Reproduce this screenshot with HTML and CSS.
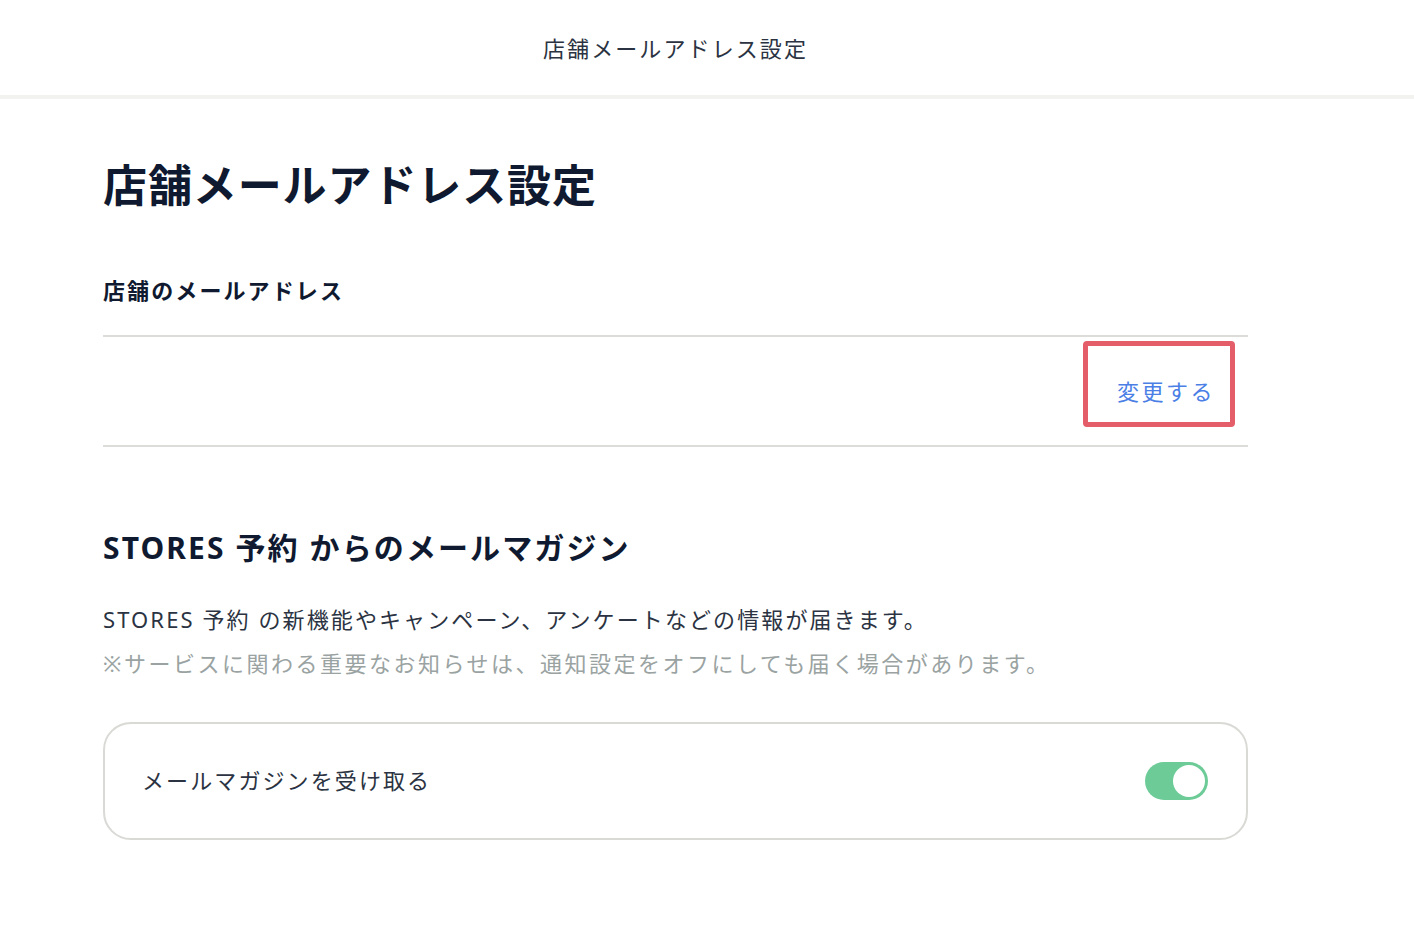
FILE: index.html
```html
<!DOCTYPE html>
<html lang="ja">
<head>
<meta charset="utf-8">
<title>店舗メールアドレス設定</title>
<link rel="stylesheet" href="styles.css">
</head>
<body>
<header class="topbar">
  <div class="topbar-inner">店舗メールアドレス設定</div>
</header>
<main class="content">
  <h1 class="page-title">店舗メールアドレス設定</h1>
  <h2 class="label">店舗のメールアドレス</h2>
  <div class="email-row">
    <button class="change-btn" type="button">変更する</button>
  </div>
  <h2 class="section-title">STORES 予約 からのメールマガジン</h2>
  <p class="desc">STORES 予約 の新機能やキャンペーン、アンケートなどの情報が届きます。</p>
  <p class="note">※サービスに関わる重要なお知らせは、通知設定をオフにしても届く場合があります。</p>
  <div class="card">
    <span class="card-label">メールマガジンを受け取る</span>
    <span class="toggle"><span class="knob"></span></span>
  </div>
</main>
</body>
</html>
```
FILE: styles.css
```css
* { box-sizing: border-box; }
html, body { margin: 0; padding: 0; background: #fff; }
body {
  font-family: "Noto Sans", "Noto Sans CJK JP", sans-serif;
  color: #2b3342;
}
.topbar {
  height: 99px;
  border-bottom: 4px solid #f2f2f0;
  padding-left: 103px;
}
.topbar-inner {
  width: 1145px;
  height: 95px;
  display: flex;
  align-items: center;
  justify-content: center;
  font-size: 22px;
  letter-spacing: 2.1px;
  color: #2b3342;
  padding-bottom: 2px;
}
.content {
  padding-left: 103px;
  width: 1248px;
}
.page-title {
  margin: 54px 0 0;
  font-size: 44px;
  line-height: 64px;
  font-weight: 700;
  letter-spacing: 0.9px;
  color: #0f192f;
}
.label {
  margin: 57px 0 0;
  font-size: 22px;
  line-height: 32px;
  font-weight: 700;
  letter-spacing: 2.1px;
  color: #0f192f;
}
.email-row {
  margin-top: 29px;
  height: 112px;
  border-top: 2px solid #dcdcd8;
  border-bottom: 2px solid #dcdcd8;
  display: flex;
  justify-content: flex-end;
  align-items: flex-start;
  padding-top: 4px;
  padding-right: 13px;
}
.change-btn {
  width: 152px;
  height: 86px;
  border: 5px solid #e45e69;
  border-radius: 4px;
  background: #fff;
  font-family: inherit;
  font-size: 22px;
  line-height: 32px;
  letter-spacing: 2.5px;
  color: #4b7fe6;
  padding: 14px 0 0 29px;
  text-align: left;
  display: block;
}
.section-title {
  margin: 79px 0 0;
  font-size: 30px;
  line-height: 44px;
  font-weight: 700;
  letter-spacing: 2.1px;
  color: #0f192f;
}
.desc {
  margin: 27px 0 0;
  font-size: 22px;
  line-height: 44px;
  letter-spacing: 2.1px;
  color: #2b3342;
}
.note {
  margin: 0;
  font-size: 22px;
  line-height: 44px;
  letter-spacing: 2.5px;
  color: #9aa3a2;
}
.card {
  margin-top: 37px;
  height: 118px;
  border: 2px solid #d9d9d5;
  border-radius: 28px;
  display: flex;
  align-items: center;
  justify-content: space-between;
  padding: 0 38px 0 37px;
}
.card-label {
  font-size: 22px;
  letter-spacing: 2.1px;
  color: #2b3342;
  padding-bottom: 5px;
}
.toggle {
  width: 63px;
  height: 38px;
  border-radius: 19px;
  background: #6dcb97;
  display: flex;
  align-items: center;
  justify-content: flex-end;
  padding-right: 3px;
}
.knob {
  width: 32px;
  height: 32px;
  border-radius: 50%;
  background: #fff;
}
```
